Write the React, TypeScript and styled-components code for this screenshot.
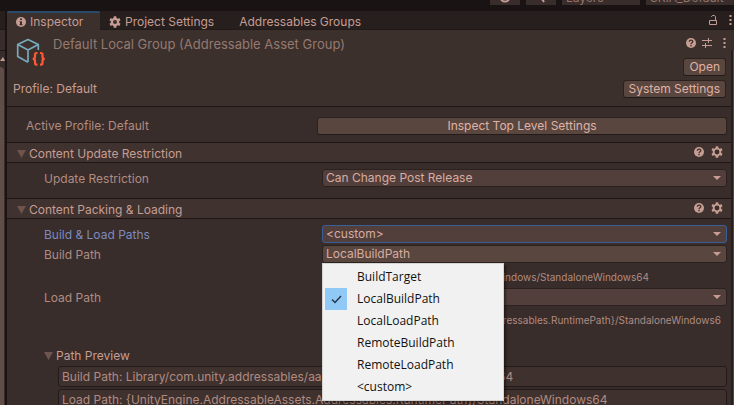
import React from "react";
import styled, { createGlobalStyle, css } from "styled-components";

const GlobalStyle = createGlobalStyle`
  *, *::before, *::after { box-sizing: border-box; }
  html, body { margin: 0; height: 100%; overflow: hidden; background: #382d2a; }
  body, button, select, input {
    font-family: Inter, "Liberation Sans", sans-serif;
    font-size: 12px;
    line-height: 16px;
    color: #c69d93;
  }
  h1, h2, h3, p, ul { margin: 0; padding: 0; font: inherit; }
  button { margin: 0; padding: 0; border: 0; background: none; }
`;

const Window = styled.div`
  height: 100vh;
  display: flex;
  flex-direction: column;
  overflow: hidden;
  background: #191313;
`;

const Toolbar = styled.header`
  flex: none;
  height: 11px;
  padding-bottom: 6px;
  display: flex;
  align-items: flex-end;
  justify-content: flex-end;
  gap: 6px;
  overflow: hidden;
`;

const ToolButton = styled.button<{ $width: number }>`
  flex: none;
  width: ${(p) => p.$width}px;
  height: 14px;
  padding: 0 4px;
  background: #382d2a;
  color: #93736b;
  line-height: 14px;
  text-align: left;
  white-space: nowrap;
  overflow: hidden;
  svg { display: block; margin: 0 auto; }
`;

const Workspace = styled.div`
  flex: 1;
  min-height: 0;
  display: flex;
`;

const SideDock = styled.aside`
  flex: none;
  width: 5px;
  margin-right: 2px;
  display: flex;
  flex-direction: column;
  background: #382d2a;
`;

const DockTabs = styled.div`
  height: 19px;
  background: #271f1e;
  border-bottom: 1px solid #1f1817;
`;

const DockTools = styled.div`
  height: 21px;
  border-bottom: 1px solid #1f1817;
`;

const DockHead = styled.div`
  height: 16px;
  display: flex;
  align-items: center;
  justify-content: flex-end;
  overflow: hidden;
`;

const DockScroll = styled.div`
  flex: 1;
  width: 4px;
  border-radius: 0 4px 0 0;
  background: #604d47;
`;

const Inspector = styled.main`
  flex: 1;
  min-width: 0;
  display: flex;
  flex-direction: column;
  background: #382d2a;
`;

const Tabs = styled.nav`
  flex: none;
  height: 19px;
  display: flex;
  background: #271f1e;
`;

const Tab = styled.button<{ $active?: boolean; $textOnly?: boolean }>`
  height: 19px;
  padding: 2px 9px 0 ${(p) => (p.$textOnly ? 16 : 9)}px;
  display: flex;
  align-items: center;
  gap: 4px;
  color: #c69d93;
  ${(p) =>
    p.$active
      ? css`
          width: 93px;
          background: #3b302c;
          border-top: 2px solid #2c4a6c;
          padding-top: 1px;
          border-radius: 2px 2px 0 0;
        `
      : css`
          padding-top: 3px;
          border-bottom: 1px solid #211a19;
        `}
`;

const TabActions = styled.div`
  flex: 1;
  display: flex;
  align-items: center;
  justify-content: flex-end;
  gap: 11px;
  padding-right: 2px;
  border-bottom: 1px solid #211a19;
`;

const IconButton = styled.button`
  display: flex;
  align-items: center;
  justify-content: center;
  svg { display: block; }
`;

const Scroller = styled.div`
  flex: 1;
  min-height: 0;
  display: flex;
`;

const Content = styled.div`
  flex: 1;
  min-width: 0;
`;

const Scrollbar = styled.div`
  flex: none;
  width: 3px;
  margin-top: 20px;
  border-left: 2px solid #271f1e;
  background: #5a4640;
`;

const AssetHeader = styled.section`
  height: 77px;
  display: flex;
  background: #3b302c;
  border-bottom: 1px solid #1e1716;
`;

const AssetInfo = styled.div`
  flex: 1;
  min-width: 0;
  padding: 6px 0 0 6px;
`;

const AssetTitle = styled.div`
  display: flex;
  gap: 6px;
  height: 45px;
  svg { flex: none; }
`;

const TitleText = styled.h1`
  font-size: 13px;
  line-height: 16px;
  color: #967970;
  white-space: nowrap;
`;

const AssetActions = styled.div`
  display: flex;
  flex-direction: column;
  align-items: flex-end;
  padding: 8px 5px 0 0;
`;

const IconRow = styled.div<{ $gap: number }>`
  display: flex;
  align-items: center;
  gap: ${(p) => p.$gap}px;
`;

const PushButton = styled.button<{ $wide?: boolean }>`
  height: 18px;
  padding: 0 5px;
  border: 1px solid #2b2220;
  border-bottom-color: #231b1a;
  border-radius: 3px;
  background: #58463f;
  color: #e0b2a6;
  ${(p) => p.$wide && css`width: 100%;`}
`;

const ButtonStack = styled.div`
  display: flex;
  flex-direction: column;
  align-items: flex-end;
  gap: 4px;
  padding-top: 10px;
`;

const ProfileRow = styled.section`
  display: grid;
  grid-template-columns: 291px 1fr;
  align-items: center;
  padding: 10px 4px 7px 19px;
  color: #b08b82;
`;

const SectionHeader = styled.header`
  height: 21px;
  display: flex;
  align-items: center;
  padding: 0 8px 0 10px;
  background: #3f322f;
  border: solid #1e1716;
  border-width: 1px 0;
`;

const SectionTitle = styled.h2`
  flex: 1;
  display: flex;
  align-items: center;
  gap: 3px;
  padding-top: 2px;
`;

const SectionActions = styled(IconRow)`
  padding-bottom: 2px;
`;

const Fields = styled.div<{ $padBottom: number }>`
  padding: 6px 4px ${(p) => p.$padBottom}px 37px;
`;

const Field = styled.div<{ $gap?: number }>`
  display: grid;
  grid-template-columns: 278px minmax(0, 1fr);
  align-items: center;
  margin-top: ${(p) => p.$gap ?? 0}px;
`;

const FieldLabel = styled.label<{ $selected?: boolean }>`
  padding-top: 2px;
  color: ${(p) => (p.$selected ? "#7d8abf" : "#b08b82")};
`;

const SelectBox = styled.div`
  position: relative;
  display: flex;
  align-items: center;
`;

const SelectInput = styled.select<{ $focused?: boolean; $open?: boolean }>`
  appearance: none;
  width: 100%;
  height: 18px;
  padding: 0 20px 0 3px;
  border: 1px solid ${(p) => (p.$focused ? "#3a5f96" : "#2b2220")};
  border-radius: 3px;
  outline: none;
  background: ${(p) => (p.$open ? "#58463f" : "#523f3b")};
  color: #d8aca1;
  line-height: 16px;
`;

const Arrow = styled.svg`
  position: absolute;
  right: 6px;
  pointer-events: none;
`;

const PathText = styled.p`
  margin-left: 278px;
  padding: 7px 5px 0 4px;
  font-size: 10px;
  line-height: 14px;
  color: #b08b82;
  white-space: nowrap;
  overflow: hidden;
`;

const Menu = styled.ul`
  position: absolute;
  z-index: 2;
  top: 18px;
  left: 0;
  width: 182px;
  padding: 2px;
  list-style: none;
  background: #f1f1f1;
  border: 1px solid #d4d4d4;
  box-shadow: 2px 2px 2px rgba(0, 0, 0, 0.4);
`;

const MenuItem = styled.button`
  width: 100%;
  height: 22px;
  display: grid;
  grid-template-columns: 22px 1fr;
  align-items: center;
  gap: 10px;
  text-align: left;
  font-family: "Open Sans", "Noto Sans", sans-serif;
  font-size: 12px;
  color: #111;
`;

const CheckCell = styled.span<{ $on: boolean }>`
  height: 22px;
  display: flex;
  align-items: center;
  justify-content: center;
  background: ${(p) => (p.$on ? "#90c8f6" : "transparent")};
`;

const Foldout = styled.button`
  display: flex;
  align-items: center;
  gap: 3px;
  margin: 21px 0 2px;
`;

const Previews = styled.div`
  display: flex;
  flex-direction: column;
  gap: 2px;
  padding-left: 14px;
`;

const Preview = styled.input`
  width: 100%;
  height: 21px;
  padding: 0 3px;
  border: 1px solid #231b1a;
  border-radius: 3px;
  outline: none;
  background: #3f312e;
  color: #b08b82;
`;

const ICON = "#c69d93";

const InfoIcon = () => (
  <svg width="10" height="10" viewBox="0 0 10 10" aria-hidden="true">
    <circle cx="5" cy="5" r="5" fill={ICON} />
    <path d="M4 1.500h2v1.500H4zM3.500 4.200H6v3h.6V8.200H3.400v-1H4V5h-.5z" fill="#3b302c" />
  </svg>
);

const HelpIcon = () => (
  <svg width="10" height="10" viewBox="0 0 10 10" aria-hidden="true">
    <circle cx="5" cy="5" r="5" fill={ICON} />
    <path d="M3.3 3.7C3.3 1.6 6.8 1.6 6.8 3.6 6.8 4.9 5 4.7 5 6.2" fill="none" stroke="#3b302c" strokeWidth="1.3" />
    <path d="M4.3 7h1.4v1.3H4.3z" fill="#3b302c" />
  </svg>
);

const GearIcon = ({ hole = 2 }: { hole?: number }) => (
  <svg width="12" height="12" viewBox="0 0 12 12" aria-hidden="true">
    {[0, 60, 120].map((a) => (
      <rect key={a} x="4.6" y="0.3" width="2.8" height="11.4" rx="0.5" fill={ICON} transform={`rotate(${a} 6 6)`} />
    ))}
    <circle cx="6" cy="6" r="4.3" fill={ICON} />
    <circle cx="6" cy="6" r={hole} fill="#3b302c" />
  </svg>
);

const DotsIcon = () => (
  <svg width="3" height="10" viewBox="0 0 3 10" aria-hidden="true">
    <path d="M.5 0h2v2h-2zM.5 4h2v2h-2zM.5 8h2v2h-2z" fill={ICON} />
  </svg>
);

const LockIcon = () => (
  <svg width="10" height="11" viewBox="0 0 10 11" aria-hidden="true">
    <path d="M1.500 5.500h7v4h-7zM7.500 5.500V2.200c0-1-.5-1.700-1.500-1.700H5c-1 0-1.500.6-1.500 1.500" fill="none" stroke={ICON} />
  </svg>
);

const PresetIcon = () => (
  <svg width="10" height="10" viewBox="0 0 10 10" aria-hidden="true">
    <path d="M0 2.500h6M8 2.500h2M0 7.500h2M4 7.500h6" stroke={ICON} />
    <path d="M6.500 0v5M3.500 5v5M6.500 2.500H8M2 7.500h1.500" stroke={ICON} />
  </svg>
);

const Triangle = () => (
  <svg width="9" height="8" viewBox="0 0 9 8" aria-hidden="true">
    <path d="M0 0h9L4.500 8z" fill="#6e544e" />
  </svg>
);

const CubeIcon = () => (
  <svg width="34" height="32" viewBox="0 0 34 32" aria-hidden="true">
    <g fill="none" stroke="#77aabd" strokeWidth="1.700" strokeLinejoin="round">
      <path d="M25.300 14V8.600L15 3.600 4.700 8.600v12L15 26.300" />
      <path d="M4.700 8.600l10.300 5.400 10.300-5.400M15 14v12" />
    </g>
    <g fill="none" stroke="#fb5a35" strokeWidth="2.200">
      <path d="M24.500 17h-1q-1.500 0-1.500 1.500v2.400q0 1.900-2.300 1.900 2.300 0 2.300 1.900v2.400q0 1.500 1.500 1.500h1" />
      <path d="M27 17h1q1.500 0 1.500 1.500v2.400q0 1.900 2.300 1.900-2.300 0-2.300 1.900v2.400q0 1.500-1.500 1.500h-1" />
    </g>
  </svg>
);

const CheckIcon = () => (
  <svg width="11" height="9" viewBox="0 0 11 9" aria-hidden="true">
    <path d="M1 4.500l3 3L10 1" fill="none" stroke="#24384a" strokeWidth="1.500" />
  </svg>
);

const DropArrow = () => (
  <Arrow width="8" height="4" viewBox="0 0 8 4" aria-hidden="true">
    <path d="M0 0h8L4 4z" fill={ICON} />
  </Arrow>
);

const PATHS = ["BuildTarget", "LocalBuildPath", "LocalLoadPath", "RemoteBuildPath", "RemoteLoadPath", "<custom>"];

type DropdownProps = {
  id: string;
  label: string;
  value: string;
  gap?: number;
  focused?: boolean;
  open?: boolean;
  options?: string[];
};

const Dropdown = ({ id, label, value, gap, focused, open, options = [value] }: DropdownProps) => (
  <Field $gap={gap}>
    <FieldLabel htmlFor={id} $selected={focused}>{label}</FieldLabel>
    <SelectBox>
      <SelectInput id={id} defaultValue={value} $focused={focused} $open={open}>
        {options.map((o) => <option key={o}>{o}</option>)}
      </SelectInput>
      <DropArrow />
      {open && (
        <Menu aria-label={label}>
          {options.map((o) => (
            <li key={o}>
              <MenuItem>
                <CheckCell $on={o === value}>{o === value && <CheckIcon />}</CheckCell>
                {o}
              </MenuItem>
            </li>
          ))}
        </Menu>
      )}
    </SelectBox>
  </Field>
);

const Section = ({ title }: { title: string }) => (
  <SectionHeader>
    <SectionTitle><Triangle />{title}</SectionTitle>
    <SectionActions $gap={7}>
      <IconButton aria-label="Help"><HelpIcon /></IconButton>
      <IconButton aria-label="Settings"><GearIcon hole={2.4} /></IconButton>
    </SectionActions>
  </SectionHeader>
);

export default function App() {
  return (
    <Window>
      <GlobalStyle />
      <Toolbar>
        <ToolButton $width={30} aria-label="History">
          <svg width="12" height="14" viewBox="0 0 12 14"><circle cx="6" cy="6" r="4.500" fill="none" stroke={ICON} strokeWidth="2" /></svg>
        </ToolButton>
        <ToolButton $width={30} aria-label="Search">
          <svg width="16" height="14" viewBox="0 0 16 14"><path d="M9 5v3l2 3" fill="none" stroke={ICON} strokeWidth="2" /></svg>
        </ToolButton>
        <ToolButton $width={78}>Layers</ToolButton>
        <ToolButton $width={88}>SRIA_Default</ToolButton>
      </Toolbar>
      <Workspace>
        <SideDock>
          <DockTabs />
          <DockTools />
          <DockHead>
            <svg width="5" height="4" viewBox="0 0 5 4"><path d="M0 4L3 0l2 4z" fill={ICON} /></svg>
          </DockHead>
          <DockScroll />
        </SideDock>
        <Inspector>
          <Tabs>
            <Tab $active><InfoIcon />Inspector</Tab>
            <Tab><GearIcon />Project Settings</Tab>
            <Tab $textOnly>Addressables Groups</Tab>
            <TabActions>
              <IconButton aria-label="Lock"><LockIcon /></IconButton>
              <IconButton aria-label="Tab menu"><DotsIcon /></IconButton>
            </TabActions>
          </Tabs>
          <Scroller>
            <Content>
              <AssetHeader>
                <AssetInfo>
                  <AssetTitle>
                    <CubeIcon />
                    <TitleText>Default Local Group (Addressable Asset Group)</TitleText>
                  </AssetTitle>
                  <p>Profile: Default</p>
                </AssetInfo>
                <AssetActions>
                  <IconRow $gap={11}>
                    <IconRow $gap={6}>
                      <IconButton aria-label="Help"><HelpIcon /></IconButton>
                      <IconButton aria-label="Presets"><PresetIcon /></IconButton>
                    </IconRow>
                    <IconButton aria-label="More"><DotsIcon /></IconButton>
                  </IconRow>
                  <ButtonStack>
                    <PushButton>Open</PushButton>
                    <PushButton>System Settings</PushButton>
                  </ButtonStack>
                </AssetActions>
              </AssetHeader>
              <ProfileRow>
                <p>Active Profile: Default</p>
                <PushButton $wide>Inspect Top Level Settings</PushButton>
              </ProfileRow>
              <Section title="Content Update Restriction" />
              <Fields $padBottom={11}>
                <Dropdown id="restriction" label="Update Restriction" value="Can Change Post Release" />
              </Fields>
              <Section title="Content Packing & Loading" />
              <Fields $padBottom={0}>
                <Dropdown id="paths" label="Build & Load Paths" value="<custom>" focused />
                <Dropdown id="build" label="Build Path" value="LocalBuildPath" gap={2} open options={PATHS} />
                <PathText>Library/com.unity.addressables/aa/Windows/StandaloneWindows64</PathText>
                <Dropdown id="load" label="Load Path" value="LocalLoadPath" gap={4} />
                <PathText>{"{UnityEngine.AddressableAssets.Addressables.RuntimePath}/StandaloneWindows6"}</PathText>
                <Foldout><Triangle />Path Preview</Foldout>
                <Previews>
                  <Preview aria-label="Build path preview" readOnly defaultValue="Build Path: Library/com.unity.addressables/aa/Windows/StandaloneWindows64" />
                  <Preview aria-label="Load path preview" readOnly defaultValue="Load Path: {UnityEngine.AddressableAssets.Addressables.RuntimePath}/StandaloneWindows64" />
                </Previews>
              </Fields>
            </Content>
            <Scrollbar />
          </Scroller>
        </Inspector>
      </Workspace>
    </Window>
  );
}
